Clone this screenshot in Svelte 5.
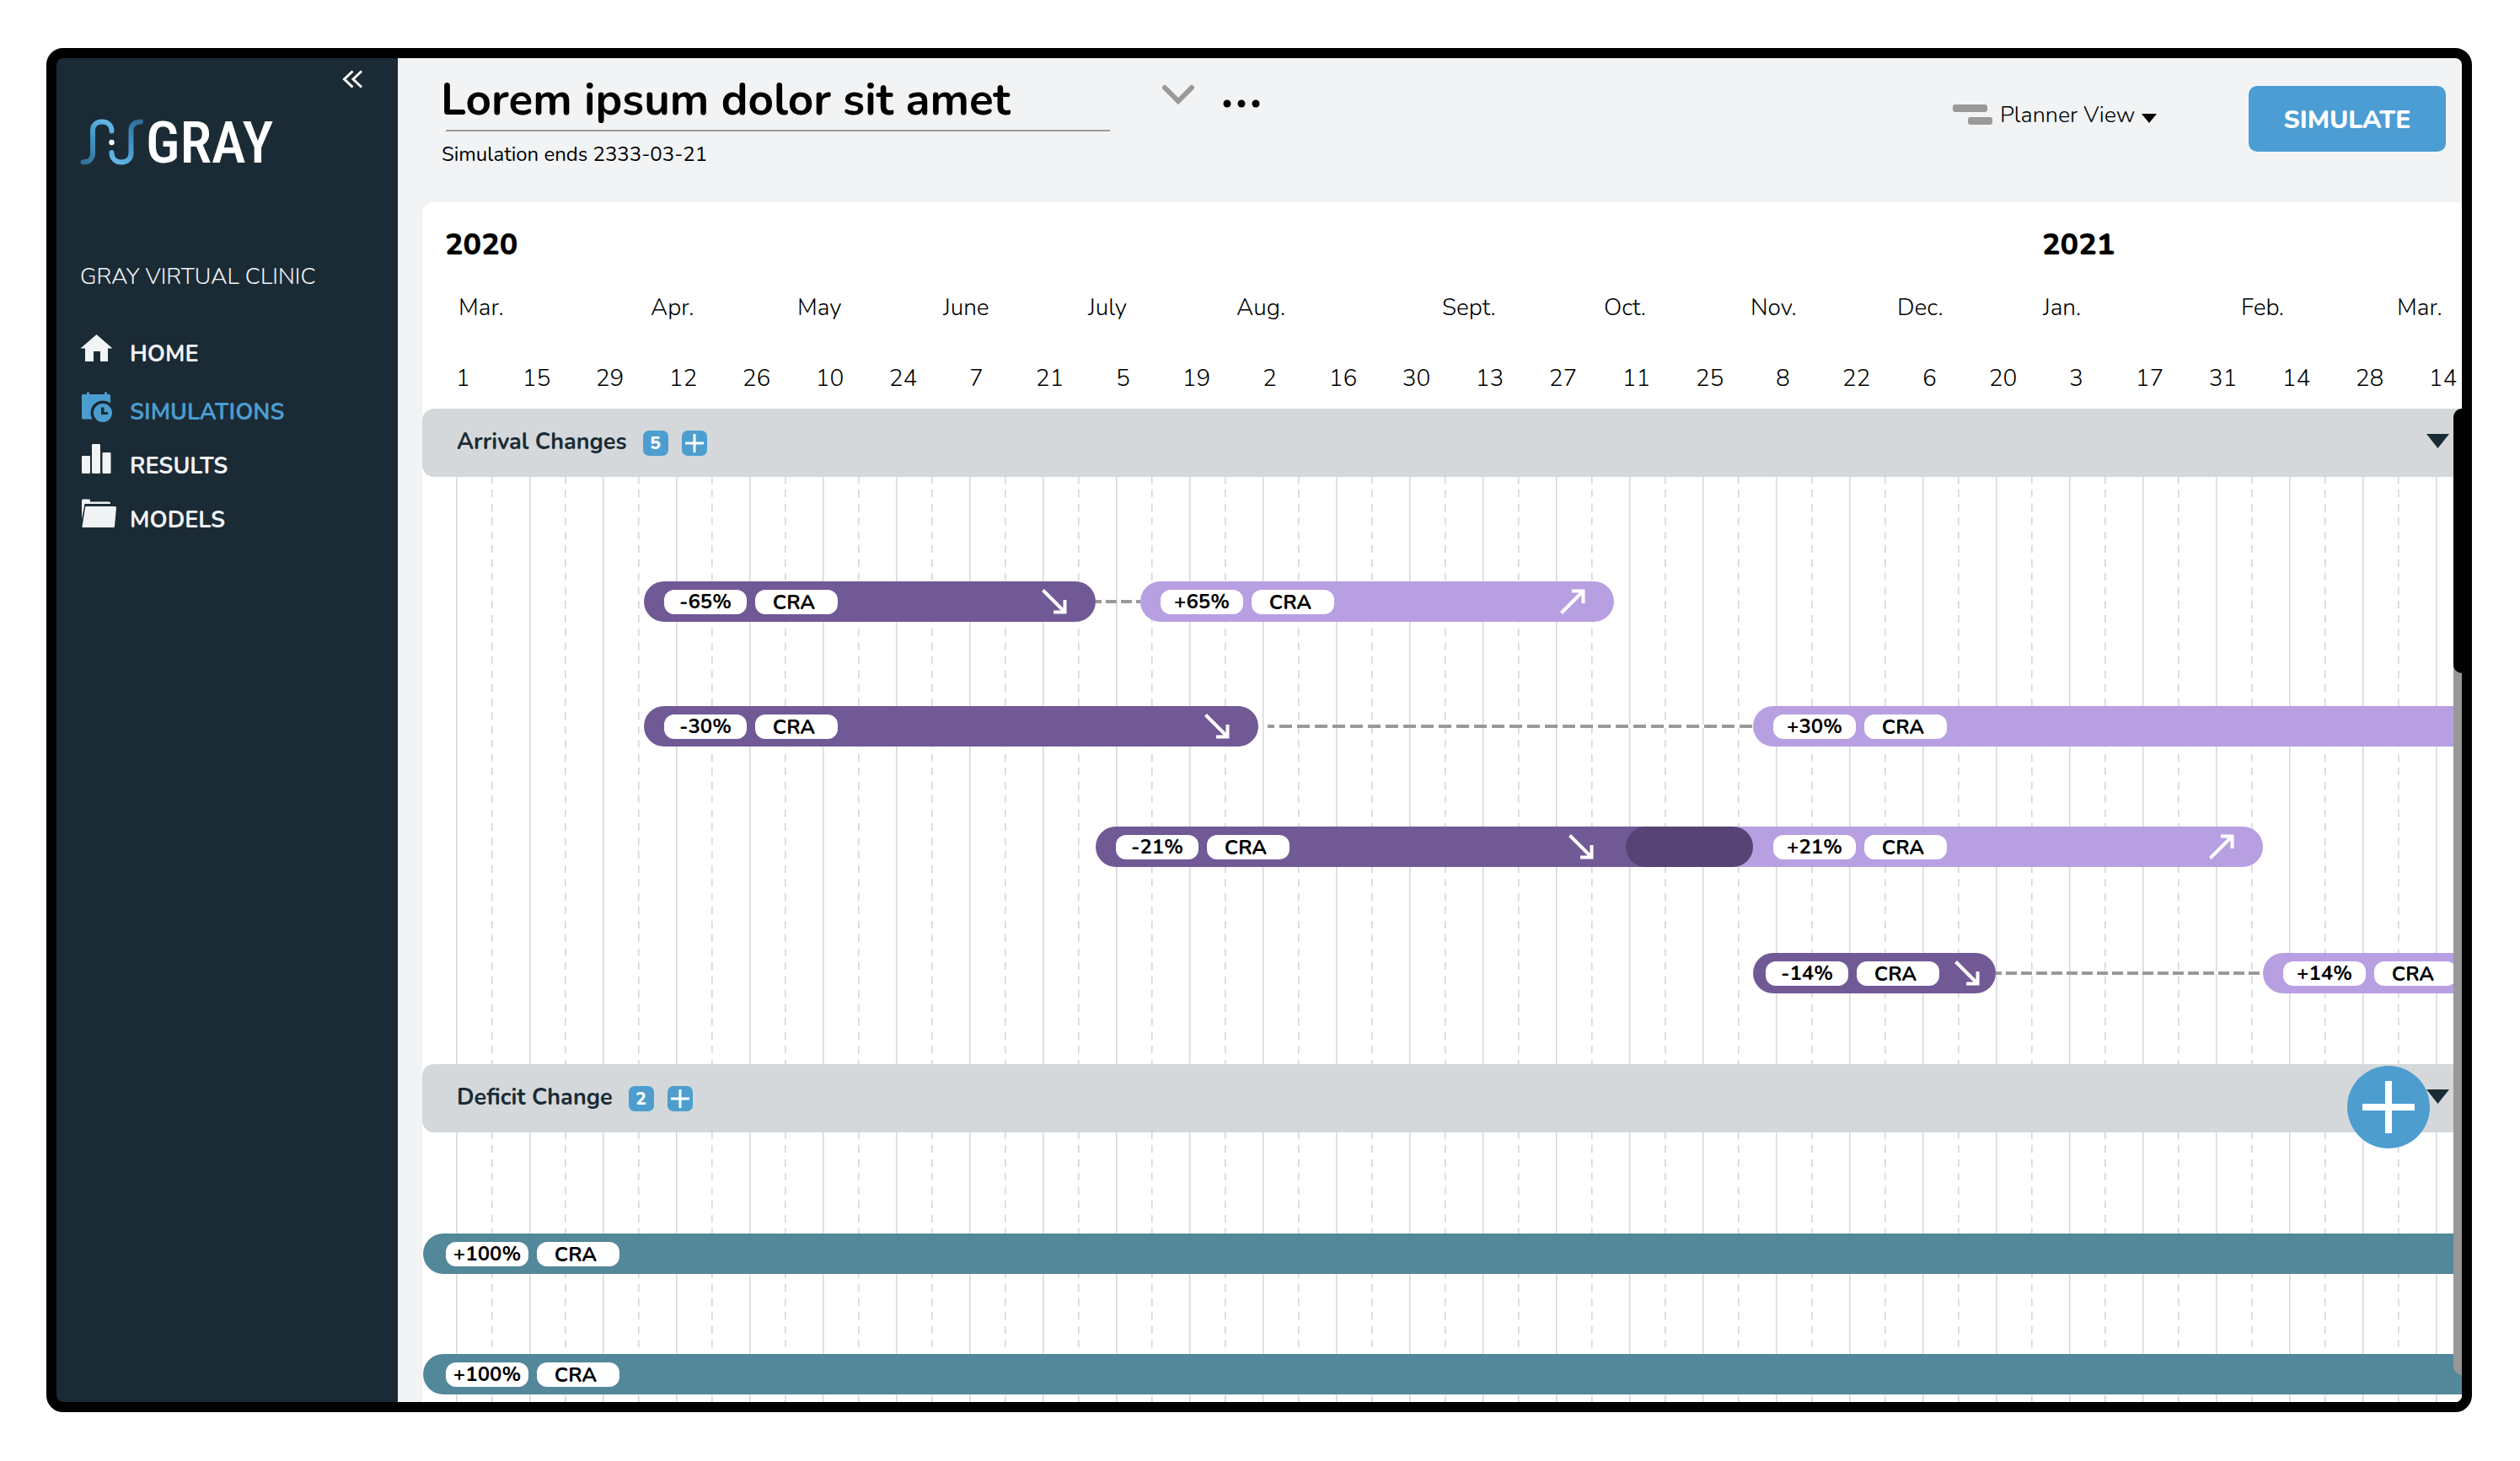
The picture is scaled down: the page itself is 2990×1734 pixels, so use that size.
<script>
  const nav = [
    { id: 'home', label: 'HOME' },
    { id: 'simulations', label: 'SIMULATIONS', active: true },
    { id: 'results', label: 'RESULTS' },
    { id: 'models', label: 'MODELS' },
  ];

  // Time axis labels; span is the distance to the next label in pixels.
  const years = [
    { label: '2020', span: 1895 },
    { label: '2021', span: 90 },
  ];
  const months = [
    { label: 'Mar.', span: 228 },
    { label: 'Apr.', span: 174 },
    { label: 'May', span: 173 },
    { label: 'June', span: 172 },
    { label: 'July', span: 176 },
    { label: 'Aug.', span: 244 },
    { label: 'Sept.', span: 192 },
    { label: 'Oct.', span: 174 },
    { label: 'Nov.', span: 174 },
    { label: 'Dec.', span: 173 },
    { label: 'Jan.', span: 235 },
    { label: 'Feb.', span: 185 },
    { label: 'Mar.', span: 70 },
  ];
  const days = [
    1, 15, 29, 12, 26, 10, 24, 7, 21, 5, 19, 2, 16, 30, 13, 27, 11, 25, 8, 22, 6, 20, 3, 17, 31,
    14, 28, 14,
  ];

  const sections = [
    {
      title: 'Arrival Changes',
      count: 5,
      rows: [
        {
          gap: 124,
          start: 263,
          items: [
            { kind: 'down', width: 536, change: '-65%', arrow: true },
            { kind: 'link', width: 53 },
            { kind: 'up', width: 562, change: '+65%', arrow: true },
          ],
        },
        {
          gap: 100,
          start: 263,
          items: [
            { kind: 'down', width: 729, change: '-30%', arrow: true },
            { kind: 'link', width: 587, detached: true },
            { kind: 'up', width: 900, change: '+30%' },
          ],
        },
        {
          gap: 95,
          start: 799,
          items: [
            { kind: 'down', width: 704, change: '-21%', arrow: true, joint: 'before' },
            { kind: 'overlap', width: 151 },
            { kind: 'up', width: 681, change: '+21%', arrow: true, joint: 'after' },
          ],
        },
        {
          gap: 102,
          start: 1579,
          items: [
            { kind: 'down', width: 288, change: '-14%', arrow: true, compact: true },
            { kind: 'link', width: 317 },
            { kind: 'up', width: 400, change: '+14%' },
          ],
        },
      ],
    },
    {
      title: 'Deficit Change',
      count: 2,
      rows: [
        { gap: 120, start: 1, items: [{ kind: 'deficit', width: 2500, change: '+100%' }] },
        { gap: 95, start: 1, items: [{ kind: 'deficit', width: 2500, change: '+100%' }] },
      ],
    },
  ];
</script>

<div class="page">
  <div class="frame">
    <aside class="sidebar">
      <button class="collapse" aria-label="Collapse menu">
        <svg width="24" height="22" viewBox="0 0 24 22" fill="none" stroke="#fff" stroke-width="3">
          <path d="M12.5 1.5 2.5 11l10 9.5M23 1.5 13 11l10 9.5" />
        </svg>
      </button>

      <a class="logo" href="#home">
        <svg width="76" height="56" viewBox="0 0 76 56" fill="none" stroke-width="6" stroke-linecap="round">
          <defs>
            <linearGradient id="rise" gradientUnits="userSpaceOnUse" x1="3" y1="52" x2="38" y2="8">
              <stop offset="0" stop-color="#2f6f99" />
              <stop offset="0.5" stop-color="#4191c2" />
              <stop offset="1" stop-color="#62b8e8" />
            </linearGradient>
            <linearGradient id="fall" gradientUnits="userSpaceOnUse" x1="38" y1="48" x2="72" y2="4">
              <stop offset="0" stop-color="#62b8e8" />
              <stop offset="0.5" stop-color="#4191c2" />
              <stop offset="1" stop-color="#2f6f99" />
            </linearGradient>
          </defs>
          <path d="M3.500 51.500C11 51.500 15 47 15 41V14C15 7.500 19 3.500 26 3.500S37.500 8 37.500 14.500" stroke="url(#rise)" />
          <path d="M37.500 40C37.500 47 42 51.500 49 51.500S60.500 47 60.500 41V14C60.500 8 64 3.500 72 3.500" stroke="url(#fall)" />
          <circle cx="37.500" cy="28" r="3.200" fill="#fff" />
        </svg>
        <span class="wordmark">GRAY</span>
      </a>

      <p class="clinic">GRAY VIRTUAL CLINIC</p>

      <nav>
        {#each nav as item}
          <a class="nav-item" class:active={item.active} href={'#' + item.id}>
            <svg width="44" height="40" viewBox="0 0 44 40" fill="currentColor">
              {#if item.id === 'home'}
                <path d="M19.500 4 38.500 20.500H33V36H24V24H16V36H6V20.500H0.500Z" />
              {:else if item.id === 'simulations'}
                <path d="M3.500 6H8V4.500a1.500 1.500 0 0 1 3 0V6H29V4.500a1.500 1.500 0 0 1 3 0V6H34.500A1.500 1.500 0 0 1 36 7.500V16.600A14.500 14.500 0 0 0 14.600 35.500H3.500A1.500 1.500 0 0 1 2 34V7.500A1.500 1.500 0 0 1 3.500 6Z" />
                <path fill-rule="evenodd" d="M27 17a11 11 0 1 1 0 22a11 11 0 0 1 0-22ZM25 21.500V30H33V27H28.500V21.500Z" />
              {:else if item.id === 'results'}
                <rect x="2" y="15" width="10" height="21" rx="1" />
                <rect x="14" y="1" width="10" height="35" rx="1" />
                <rect x="26.500" y="11" width="10" height="25" rx="1" />
              {:else}
                <path d="M2 26V4a1.500 1.500 0 0 1 1.500-1.500H10.500A1.500 1.500 0 0 1 12 4V5.500H34.500A1.500 1.500 0 0 1 36 7V8H5.500Z" />
                <path d="M8 11H41.500a1.500 1.500 0 0 1 1.500 1.500L41 34.500a1.500 1.500 0 0 1-1.500 1.500H3Q2.500 36 2.500 35L6 12.500A1.500 1.500 0 0 1 8 11Z" />
              {/if}
            </svg>
            <span>{item.label}</span>
          </a>
        {/each}
      </nav>
    </aside>

    <main>
      <header class="topbar">
        <div class="heading">
          <h1>Lorem ipsum dolor sit amet</h1>
          <div class="rule"></div>
          <p>Simulation ends 2333-03-21</p>
        </div>
        <button class="expand" aria-label="Choose simulation">
          <svg width="40" height="26" viewBox="0 0 40 26" fill="none" stroke="#999" stroke-width="6" stroke-linecap="round">
            <path d="M4 4 20 20 36 4" />
          </svg>
        </button>
        <button class="more" aria-label="More actions">
          <svg width="44" height="10" viewBox="0 0 44 10">
            <circle cx="5" cy="5" r="4.500" /><circle cx="22" cy="5" r="4.500" /><circle cx="39" cy="5" r="4.500" />
          </svg>
        </button>
        <label class="view">
          <svg width="47" height="26" viewBox="0 0 47 26" fill="#999">
            <rect x="0" y="0" width="41" height="9" rx="3" />
            <rect x="18" y="15" width="29" height="9" rx="3" />
          </svg>
          <select aria-label="View">
            <option>Planner View</option>
          </select>
          <svg class="caret" width="18" height="11" viewBox="0 0 18 11"><path d="M0 0H18L9 11Z" /></svg>
        </label>
        <button class="simulate">SIMULATE</button>
      </header>

      <div class="planner">
        <div class="axis">
          <div class="years">
            {#each years as year}
              <span style="width: {year.span}px">{year.label}</span>
            {/each}
          </div>
          <div class="months">
            {#each months as month}
              <span style="width: {month.span}px">{month.label}</span>
            {/each}
          </div>
          <div class="days">
            {#each days as day}
              <span>{day}</span>
            {/each}
          </div>
        </div>

        <div class="board">
          {#each sections as section}
            <section>
              <div class="section-head">
                <h2>{section.title}</h2>
                <span class="count">{section.count}</span>
                <button class="add" aria-label="Add to {section.title}">
                  <svg width="22" height="22" viewBox="0 0 22 22" stroke="#fff" stroke-width="3">
                    <path d="M11 0V22M0 11H22" />
                  </svg>
                </button>
                <button class="fold" aria-label="Fold {section.title}">
                  <svg width="27" height="17" viewBox="0 0 27 17"><path d="M0 0H27L13.500 17Z" /></svg>
                </button>
              </div>
              <div class="lanes">
                {#each section.rows as row}
                  <div class="lane" style="margin-top: {row.gap}px; padding-left: {row.start}px">
                    {#each row.items as item}
                      {#if item.kind === 'link'}
                        <div class="link" class:detached={item.detached} style="width: {item.width}px"></div>
                      {:else if item.kind === 'overlap'}
                        <div class="overlap" style="width: {item.width}px"></div>
                      {:else}
                        <div
                          class="bar {item.kind} {item.joint ?? ''}"
                          class:compact={item.compact}
                          style="width: {item.width}px"
                        >
                          <span class="pill">{item.change}</span>
                          <span class="pill tag">CRA</span>
                          {#if item.arrow}
                            <svg class="arrow" width="30" height="30" viewBox="0 0 30 30" fill="none" stroke="#fff" stroke-width="4">
                              {#if item.kind === 'down'}
                                <path d="M1.500 1.500 27 27M27.500 13V27.500H14" />
                              {:else}
                                <path d="M1.500 28.500 27 3M14 2.500H27.500V17" />
                              {/if}
                            </svg>
                          {/if}
                        </div>
                      {/if}
                    {/each}
                  </div>
                {/each}
              </div>
            </section>
          {/each}
          <div class="scrollbar"><div class="thumb"></div></div>
        </div>
      </div>
    </main>

    <button class="fab" aria-label="Add change">
      <svg width="62" height="62" viewBox="0 0 62 62" stroke="#fff" stroke-width="8">
        <path d="M31 0V62M0 31H62" />
      </svg>
    </button>
  </div>
</div>

<style>
  :global(body) {
    background: #fff;
  }
  .page,
  .page :global(*) {
    box-sizing: border-box;
  }
  .page {
    display: flex;
    min-height: 100vh;
    padding: 57px 57px 58px 55px;
    font-family: Nunito, Lato, 'Open Sans', sans-serif;
    color: #000;
  }
  h1,
  h2,
  p {
    margin: 0;
  }
  button {
    display: flex;
    align-items: center;
    justify-content: center;
    padding: 0;
    border: 0;
    background: none;
    font-family: inherit;
    cursor: pointer;
  }
  svg {
    display: block;
    flex: none;
  }
  .frame {
    position: relative;
    display: flex;
    flex: 1;
    min-width: 0;
    overflow: hidden;
    border: 12px solid #000;
    border-radius: 20px;
    background: #000;
  }

  .sidebar {
    display: flex;
    flex: none;
    flex-direction: column;
    width: 405px;
    padding: 14px 28px;
    background: #1b2b35;
    color: #f1f3f5;
  }
  .collapse {
    align-self: flex-end;
    margin-right: 14px;
  }
  .logo {
    display: flex;
    align-items: center;
    gap: 2px;
    height: 56px;
    margin-top: 36px;
    color: #fff;
    text-decoration: none;
  }
  .wordmark {
    padding-top: 2px;
    font: 500 69px/56px 'Roboto Condensed', 'Liberation Sans Narrow', Roboto, sans-serif;
  }
  .clinic {
    margin-top: 114px;
    font-size: 27px;
    font-weight: 300;
    line-height: 36px;
  }
  nav {
    margin-top: 34px;
  }
  .nav-item {
    display: flex;
    align-items: center;
    gap: 15px;
    height: 64px;
    color: #f1f3f5;
    font-size: 27px;
    font-weight: 700;
    text-decoration: none;
  }
  .nav-item span {
    padding-top: 14px;
  }
  .active {
    margin-top: 5px;
    color: #4b9dd0;
  }

  main {
    display: flex;
    flex: 1;
    flex-direction: column;
    min-width: 0;
    background: #f1f3f5;
  }
  .topbar {
    display: flex;
    align-items: flex-start;
    height: 171px;
    padding: 16px 19px 0 49px;
  }
  .heading {
    width: 796px;
  }
  h1 {
    padding: 2px 0 0 2px;
    font-size: 53px;
    font-weight: 700;
    line-height: 64px;
    white-space: nowrap;
  }
  .rule {
    height: 2px;
    margin: 3px 0 11px 8px;
    background: #999;
  }
  .heading p {
    padding-left: 3px;
    font-size: 24px;
    line-height: 32px;
  }
  .expand {
    margin: 15px 0 0 61px;
  }
  .more {
    margin: 33px 0 0 33px;
  }
  .view {
    display: flex;
    align-items: center;
    margin: 34px 109px 0 auto;
    line-height: 36px;
  }
  select {
    margin: 0 7px 0 9px;
    padding: 0;
    border: 0;
    appearance: none;
    background: none;
    color: #000;
    font-family: inherit;
    font-size: 27px;
    font-weight: 300;
    line-height: 36px;
  }
  .caret {
    margin-top: 6px;
  }
  .simulate {
    width: 234px;
    height: 78px;
    margin-top: 17px;
    padding-top: 2px;
    border-radius: 10px;
    background: #4b9dd4;
    color: #fff;
    font-size: 30px;
    font-weight: 800;
  }

  .planner {
    display: flex;
    flex: 1;
    flex-direction: column;
    min-width: 0;
    margin-left: 29px;
    overflow: hidden;
    border-radius: 14px 0 0 0;
    background: #fff;
  }
  .axis {
    padding: 27px 0 18px;
    font-size: 28px;
    font-weight: 300;
    line-height: 36px;
  }
  .years,
  .months,
  .days {
    display: flex;
  }
  .axis span {
    flex: none;
  }
  .years {
    padding-left: 27px;
    font-size: 36px;
    font-weight: 800;
    line-height: 48px;
  }
  .months {
    margin: 32px 0 48px;
    padding-left: 43px;
  }
  .days {
    padding-left: 5px;
  }
  .days span {
    width: 87px;
    text-align: center;
  }

  .board {
    position: relative;
    display: flex;
    flex: 1;
    flex-direction: column;
  }
  section:nth-child(2) {
    display: flex;
    flex: 1;
    flex-direction: column;
  }
  .section-head {
    display: flex;
    align-items: center;
    height: 81px;
    padding: 0 15px 0 41px;
    border-radius: 14px 0 0 14px;
    background: #d4d8db;
  }
  h2 {
    margin-right: 19px;
    padding-bottom: 2px;
    color: #1b2b35;
    font-size: 27px;
    font-weight: 700;
    line-height: 36px;
  }
  .count,
  .add {
    width: 30px;
    height: 30px;
    margin-right: 16px;
    border-radius: 7px;
    background: #4d9ecf;
    color: #fff;
    font-size: 21px;
    font-weight: 800;
    line-height: 30px;
    text-align: center;
  }
  .fold {
    margin-left: auto;
    padding-bottom: 4px;
    fill: #1b2b35;
  }
  .lanes {
    display: flow-root;
    flex: 1;
    padding-bottom: 84px;
    overflow: hidden;
    background:
      repeating-linear-gradient(90deg, #d4d8db 0 1px, #e9ebec 1px 2px, transparent 2px 87px) 40px 0 / 87px 100%,
      repeating-linear-gradient(#fff0 0 8px, #fff 8px 15px, #fff0 15px 24px, #fff 24px 32px, #fff0 32px 33px) 0 0 / 100% 33px,
      repeating-linear-gradient(90deg, #d4d8db 0 1px, #e4e6e8 1px 2px, #fff 2px 87px) 82px 0 / 87px 100%;
  }
  section:nth-child(2) .lanes {
    padding-bottom: 9px;
  }
  .lane {
    display: flex;
    align-items: center;
    height: 48px;
  }
  .bar {
    display: flex;
    flex: none;
    align-items: center;
    gap: 10px;
    height: 48px;
    padding: 0 34px 0 24px;
    border-radius: 24px;
  }
  .down {
    background: #715996;
  }
  .up {
    background: #b89fe2;
  }
  .deficit {
    padding-left: 27px;
    background: #53889a;
  }
  .compact {
    padding: 0 19px 0 15px;
  }
  .before {
    padding-right: 113px;
    border-radius: 24px 0 0 24px;
  }
  .after {
    padding-left: 100px;
    border-radius: 0 24px 24px 0;
  }
  .overlap {
    z-index: 1;
    flex: none;
    height: 48px;
    margin: 0 -76px 0 -75px;
    border-radius: 24px;
    background: #554474;
  }
  .pill {
    flex: none;
    width: 98px;
    height: 29px;
    border-radius: 12px;
    background: #fff;
    font-size: 24px;
    font-weight: 700;
    line-height: 28px;
    text-align: center;
  }
  .tag {
    padding-right: 6px;
    line-height: 30px;
  }
  .arrow {
    margin-left: auto;
  }
  .link {
    flex: none;
    height: 4px;
    background: repeating-linear-gradient(90deg, #999 0 7px, #fff 7px 12px, #999 12px 18px);
  }
  .detached {
    border-left: 11px solid transparent;
    background: repeating-linear-gradient(90deg, #999 0 8px, #fff 8px 14px, #999 14px 21px) padding-box;
  }

  /* Laid over the right edge of the board */
  .scrollbar {
    position: absolute;
    top: 0;
    right: 0;
    bottom: 32px;
    width: 10px;
    border-radius: 10px 0 0 10px;
    background: #979797;
  }
  .thumb {
    height: 314px;
    border-radius: 10px 0 0 10px;
    background: #000;
  }

  /* Floats above the planner */
  .fab {
    position: absolute;
    right: 38px;
    bottom: 301px;
    width: 98px;
    height: 98px;
    border-radius: 50%;
    background: #4d9ecf;
  }
</style>
